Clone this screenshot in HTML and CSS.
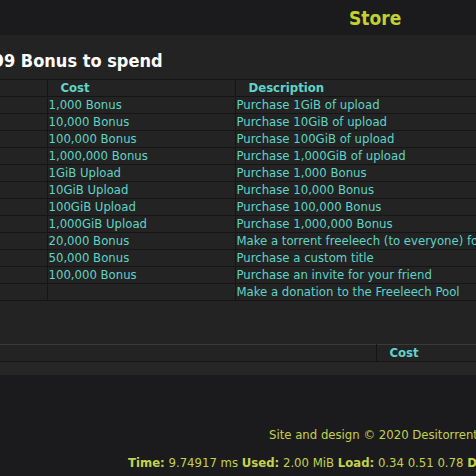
FILE: index.html
```html
<!DOCTYPE html>
<html>
<head>
<meta charset="utf-8">
<link rel="stylesheet" href="styles.css">
</head>
<body>
<div class="page">
  <header class="topbar">
    <h1 class="store-title">Store</h1>
  </header>
  <main class="content">
    <h2 class="bonus-title">1,099 Bonus to spend</h2>
    <table class="store-table">
      <colgroup><col class="w-id"><col class="w-cost"><col class="w-desc"></colgroup>
      <thead>
        <tr><th></th><th>Cost</th><th>Description</th></tr>
      </thead>
      <tbody>
        <tr><td></td><td>1,000 Bonus</td><td>Purchase 1GiB of upload</td></tr>
        <tr><td></td><td>10,000 Bonus</td><td>Purchase 10GiB of upload</td></tr>
        <tr><td></td><td>100,000 Bonus</td><td>Purchase 100GiB of upload</td></tr>
        <tr><td></td><td>1,000,000 Bonus</td><td>Purchase 1,000GiB of upload</td></tr>
        <tr><td></td><td>1GiB Upload</td><td>Purchase 1,000 Bonus</td></tr>
        <tr><td></td><td>10GiB Upload</td><td>Purchase 10,000 Bonus</td></tr>
        <tr><td></td><td>100GiB Upload</td><td>Purchase 100,000 Bonus</td></tr>
        <tr><td></td><td>1,000GiB Upload</td><td>Purchase 1,000,000 Bonus</td></tr>
        <tr><td></td><td>20,000 Bonus</td><td>Make a torrent freeleech (to everyone) for 24 hours</td></tr>
        <tr><td></td><td>50,000 Bonus</td><td>Purchase a custom title</td></tr>
        <tr><td></td><td>100,000 Bonus</td><td>Purchase an invite for your friend</td></tr>
        <tr><td></td><td></td><td>Make a donation to the Freeleech Pool</td></tr>
      </tbody>
    </table>
    <table class="second-table">
      <colgroup><col class="w-name"><col class="w-scost"></colgroup>
      <thead>
        <tr><th class="s-name"></th><th class="s-cost">Cost</th></tr>
      </thead>
      <tbody>
        <tr><td></td><td></td></tr>
      </tbody>
    </table>
  </main>
  <footer class="footer">
    <p class="credit">Site and design © 2020 Desitorrents</p>
    <p class="stats"><b>Time:</b> 9.74917 ms <b>Used:</b> 2.00 MiB <b>Load:</b> 0.34 0.51 0.78 <b>Date:</b> 2020</p>
  </footer>
</div>
</body>
</html>
```
FILE: styles.css
```css
html, body {
  margin: 0;
  padding: 0;
  background: #1b1b1d;
}
body {
  font-family: "DejaVu Sans Condensed", "DejaVu Sans", sans-serif;
  font-stretch: condensed;
  font-size: 13px;
  color: #5fd4c8;
  width: 476px;
  height: 476px;
  overflow: hidden;
}
.page {
  width: 476px;
  overflow: hidden;
}
.topbar {
  height: 35px;
  background: #1b1b1d;
  display: flex;
  align-items: center;
  padding-left: 349px;
}
.store-title {
  margin: 0;
  font-size: 19px;
  font-weight: bold;
  color: #c2d130;
}
.content {
  background: #232323;
  padding-top: 16px;
  overflow: hidden;
}
.bonus-title {
  margin: 0 0 8px 0;
  font-size: 18px;
  line-height: 20px;
  font-weight: bold;
  color: #ffffff;
  white-space: nowrap;
  text-indent: -36px;
}
table {
  border-collapse: collapse;
  white-space: nowrap;
  table-layout: fixed;
}
.store-table {
  width: 600px;
  border-top: 1px solid #151515;
}
.w-id { width: 47px; }
.w-cost { width: 188px; }
.w-desc { width: 365px; }
.store-table td, .store-table th {
  height: 16px;
  line-height: 16px;
  padding: 0 0 0 1px;
  border-bottom: 1px solid #151515;
  border-left: 1px solid #151515;
  text-align: left;
  vertical-align: middle;
  overflow: hidden;
}
.store-table th {
  font-weight: bold;
  font-size: 13px;
  padding-left: 13px;
}
.store-table tr > :first-child {
  border-left: none;
  padding: 0;
}
.second-table {
  width: 600px;
  margin-top: 43px;
  border-top: 1px solid #3a3a3a;
}
.w-name { width: 376px; }
.w-scost { width: 224px; }
.second-table th {
  height: 16px;
  line-height: 16px;
  padding: 0;
  border-bottom: 1px solid #151515;
  text-align: left;
  font-size: 13px;
  font-weight: bold;
}
.second-table .s-name {
  border-right: 1px solid #151515;
}
.second-table .s-cost {
  padding-left: 13px;
}
.second-table td {
  height: 13px;
  padding: 0;
  background: #262626;
}
.footer {
  background: #1b1b1d;
  color: #c4d24a;
  font-size: 13px;
  line-height: 15px;
  white-space: nowrap;
  padding-top: 52px;
}
.footer p {
  margin: 0;
}
.credit {
  padding-left: 269px;
  height: 28px;
}
.stats {
  padding-left: 128px;
}
```
